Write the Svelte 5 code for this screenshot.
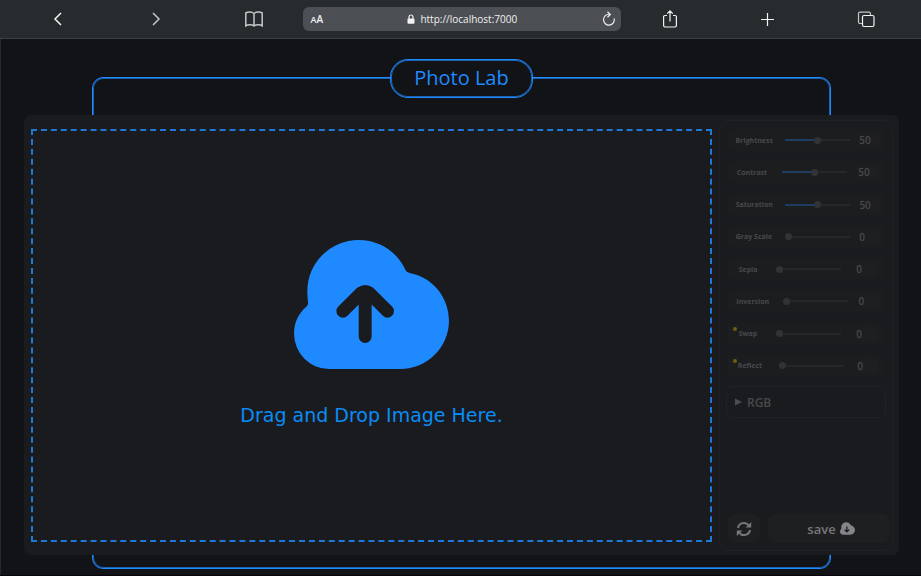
<script>
  let filters = $state([
    { name: 'Brightness', value: 50 },
    { name: 'Contrast', value: 50 },
    { name: 'Saturation', value: 50 },
    { name: 'Gray Scale', value: 0 },
    { name: 'Sepia', value: 0 },
    { name: 'Inversion', value: 0 },
    { name: 'Swap', value: 0, marked: true },
    { name: 'Reflect', value: 0, marked: true }
  ]);
</script>

{#snippet cloud(up)}
  <svg class="cloud" viewBox="222 44 466 388" aria-hidden="true">
    <path class="puff" d="M326 432A104 107 0 0 1 222 325C222 292 236 264 260 244Q265 239 264 230C263 220 262 208 262 198A154 154 0 0 1 416 44C478 44 530 78 555 130Q559 142 572 144C640 157 688 218 688 287C688 367 622 432 542 432Z" />
    {#if up}
      <path class="arrow" d="M436 334V204M369 258L423 204Q436 195 449 204L503 258" />
    {:else}
      <path class="arrow" d="M436 190V330M376 284L436 342L496 284" />
    {/if}
  </svg>
{/snippet}

<div class="page">
  <header>
    <button class="icon" aria-label="Back">
      <svg width="20" height="20" viewBox="0 0 20 20"><path d="M13 4L7 10L13 16" stroke-width="1.5" /></svg>
    </button>
    <button class="icon dim" aria-label="Forward">
      <svg width="20" height="20" viewBox="0 0 20 20"><path d="M7 4L13 10L7 16" stroke-width="1.5" /></svg>
    </button>
    <button class="icon dim" aria-label="Bookmarks">
      <svg width="20" height="20" viewBox="0 0 20 20"><path d="M10 4.5C8 2.8 4 2.6 1.8 4V16.8C4 15.4 8 15.6 10 17C12 15.6 16 15.4 18.2 16.8V4C16 2.6 12 2.8 10 4.5ZM10 4.5V17" stroke-width="1.5" /></svg>
    </button>
    <div class="address">
      <button class="size" aria-label="Text size"><small>A</small>A</button>
      <a class="url" href="http://localhost:7000">
        <svg width="8" height="10" viewBox="0 0 8 10"><path d="M2 5V3A2 2 0 0 1 6 3V5" /><rect x="0.5" y="4.5" width="7" height="5.2" rx="1" class="solid" /></svg>
        <span>http://localhost:7000</span>
      </a>
      <button class="icon" aria-label="Reload">
        <svg width="14" height="16" viewBox="0 0 14 16"><path d="M12.2 7.5A5.4 5.4 0 1 1 7.5 3.3M5.5 0.8L8.3 3.5L5.5 6.2" /></svg>
      </button>
    </div>
    <button class="icon" aria-label="Share">
      <svg width="20" height="20" viewBox="0 0 20 20"><path d="M7 6.5H5A1.4 1.4 0 0 0 3.6 8V16.6A1.4 1.4 0 0 0 5 18H15A1.4 1.4 0 0 0 16.4 16.6V8A1.4 1.4 0 0 0 15 6.5H13M10 12.5V2M7.2 4.6L10 1.8L12.8 4.6" /></svg>
    </button>
    <button class="icon" aria-label="New tab">
      <svg width="20" height="20" viewBox="0 0 20 20"><path d="M9.5 4V17M3 10.5H16" /></svg>
    </button>
    <button class="icon" aria-label="Tabs">
      <svg width="20" height="20" viewBox="0 0 20 20"><path d="M6.5 14.5H3.9A1.4 1.4 0 0 1 2.5 13.1V4.5A1.4 1.4 0 0 1 3.9 3.1H13A1.4 1.4 0 0 1 14.4 4.5V6.5" class="dim" /><rect x="6.5" y="6.5" width="11.5" height="11" rx="1.5" /></svg>
    </button>
  </header>

  <main>
    <div class="frame"></div>
    <h1>Photo Lab</h1>
    <section class="card">
      <button class="drop">
        {@render cloud(true)}
        <span>Drag and Drop Image Here.</span>
      </button>

      <aside>
        <div class="filters">
          {#each filters as f, i}
            <div class="row" class:marked={f.marked}>
              <label for="filter-{i}">{f.name}</label>
              <input id="filter-{i}" type="range" min="0" max="100" bind:value={f.value} style="--fill: {f.value}%" />
              <output for="filter-{i}">{f.value}</output>
            </div>
          {/each}
        </div>
        <details>
          <summary>
            <svg width="7" height="8" viewBox="0 0 7 8"><path d="M0 0.5L7 4L0 7.5Z" /></svg>
            RGB
          </summary>
        </details>
        <div class="actions">
          <button class="reset" aria-label="Reset">
            <svg width="16" height="16" viewBox="0 0 16 16"><path d="M2 7A6 6 0 0 1 12.6 4.2M14 9A6 6 0 0 1 3.4 11.8" /><path class="tip" d="M15.2 1V6.6H9.6ZM0.8 15V9.4H6.4Z" /></svg>
          </button>
          <button class="save">save {@render cloud(false)}</button>
        </div>
      </aside>
    </section>
  </main>
</div>

<style>
  :global(body) {
    background: #121317;
  }
  .page {
    display: flex;
    flex-direction: column;
    min-height: 100vh;
    box-sizing: border-box;
    border-bottom: 1px solid #08020a;
    font-family: "Open Sans", "Noto Sans", sans-serif;
  }
  button {
    border: 0;
    padding: 0;
    background: none;
    color: inherit;
    font: inherit;
  }
  header {
    display: grid;
    grid-template-columns: repeat(3, 1fr) 35% repeat(3, 1fr);
    align-items: center;
    height: 38px;
    padding: 0 6px 0 9px;
    background: #262b2e;
    border-bottom: 1px solid #3c4144;
    color: #f2f2f2;
  }
  .icon {
    display: flex;
    justify-content: center;
  }
  header svg {
    fill: none;
    stroke: currentColor;
    stroke-width: 1.2;
  }
  .dim {
    color: #c4c6c7;
    stroke: #c4c6c7;
  }
  .solid {
    fill: currentColor;
    stroke: none;
  }
  .address {
    display: flex;
    align-items: center;
    justify-content: space-between;
    height: 24px;
    padding: 0 5px 0 7px;
    border-radius: 6px;
    background: #4c4f54;
    font-size: 10px;
    font-weight: 500;
  }
  .size {
    font-weight: 600;
  }
  .size small {
    font-size: 9px;
  }
  .url {
    display: flex;
    align-items: center;
    gap: 5px;
    color: inherit;
    text-decoration: none;
  }
  main {
    flex: 1;
    display: grid;
    padding: 20px 0 0 1px;
    border-left: 1px solid #25292c;
  }
  .frame,
  h1,
  .card {
    grid-area: 1 / 1;
  }
  .frame,
  h1 {
    border: 1px solid #1f8aff;
    box-shadow: inset 0 0 0 1px #1c62b0;
  }
  .frame {
    width: 80%;
    margin: 18px auto 6px;
    padding: 1px;
    border-radius: 11px;
  }
  h1 {
    justify-self: center;
    align-self: start;
    margin: 0;
    padding: 0 23px 2px;
    border-radius: 18px;
    background: #121317;
    color: #1f8aff;
    font-size: 20px;
    font-weight: 500;
    line-height: 35px;
  }
  .card {
    display: flex;
    gap: 7px;
    margin: 56px 22px 20px;
    padding: 5px 6px 4px 7px;
    border-radius: 7px;
    background: #1a1b1e;
    z-index: 1;
  }
  .drop {
    flex: 1;
    display: flex;
    flex-direction: column;
    align-items: center;
    justify-content: center;
    gap: 34px;
    margin: 9px 0;
    padding-bottom: 4px;
    border: 2px dashed #1f78d8;
    color: #0a8cf5;
    font-family: "DejaVu Sans", sans-serif;
    font-size: 19px;
    line-height: 24px;
  }
  .drop .cloud {
    width: 155px;
    height: 129px;
  }
  .puff {
    fill: #1f8aff;
  }
  .arrow {
    fill: none;
    stroke: #1a1b1e;
    stroke-width: 39;
    stroke-linecap: round;
  }
  aside {
    display: flex;
    flex-direction: column;
    width: 174px;
    box-sizing: border-box;
    padding: 3px 2px 7px 6px;
    border: 1px solid #1f2124;
    border-radius: 10px;
    color: #48494c;
  }
  .filters {
    display: flex;
    flex-direction: column;
    justify-content: space-around;
    height: 258px;
    padding: 0 5px 0 1px;
  }
  .row {
    position: relative;
    display: flex;
    align-items: center;
    justify-content: space-around;
    height: 22px;
    padding-left: 4px;
    border-radius: 8px;
    background: #1c1d1f;
  }
  .marked::before {
    content: "";
    position: absolute;
    left: 6px;
    top: 4px;
    width: 4px;
    height: 4px;
    border-radius: 50%;
    background: #755a16;
  }
  label {
    font-size: 7px;
    font-weight: 700;
  }
  input {
    appearance: none;
    width: 65px;
    height: 8px;
    margin: 0 0 0 3px;
    background: linear-gradient(to right, #1d3d62 var(--fill), #25272a var(--fill)) center / 100% 2px no-repeat;
  }
  input::-webkit-slider-thumb {
    appearance: none;
    width: 7px;
    height: 7px;
    border-radius: 50%;
    background: #323336;
  }
  output {
    width: 21px;
    border-radius: 4px;
    background: #1e1f21;
    font-size: 10px;
    font-weight: 600;
    line-height: 14px;
  }
  details {
    margin: 4px 4px 0 0;
    border: 1px solid #202225;
    border-radius: 7px;
  }
  summary {
    display: flex;
    align-items: center;
    gap: 5px;
    height: 30px;
    padding-left: 8px;
    font-size: 12px;
    font-weight: 600;
    list-style: none;
  }
  summary svg {
    fill: #4c4d50;
  }
  .actions {
    display: flex;
    gap: 8px;
    margin: auto 0 0 2px;
  }
  .actions button {
    display: flex;
    align-items: center;
    justify-content: center;
    gap: 4px;
    height: 29px;
    border-radius: 8px;
    background: #1e1f20;
    color: #77787a;
    font-size: 13px;
    font-weight: 600;
  }
  .reset {
    width: 32px;
  }
  .reset svg {
    fill: none;
    stroke: currentColor;
    stroke-width: 2;
  }
  .reset .tip {
    fill: currentColor;
    stroke: none;
  }
  .actions .save {
    flex: 1;
    padding-left: 4px;
  }
  .save .cloud {
    width: 15px;
    height: 13px;
  }
  .save .puff {
    fill: #85868a;
  }
</style>
